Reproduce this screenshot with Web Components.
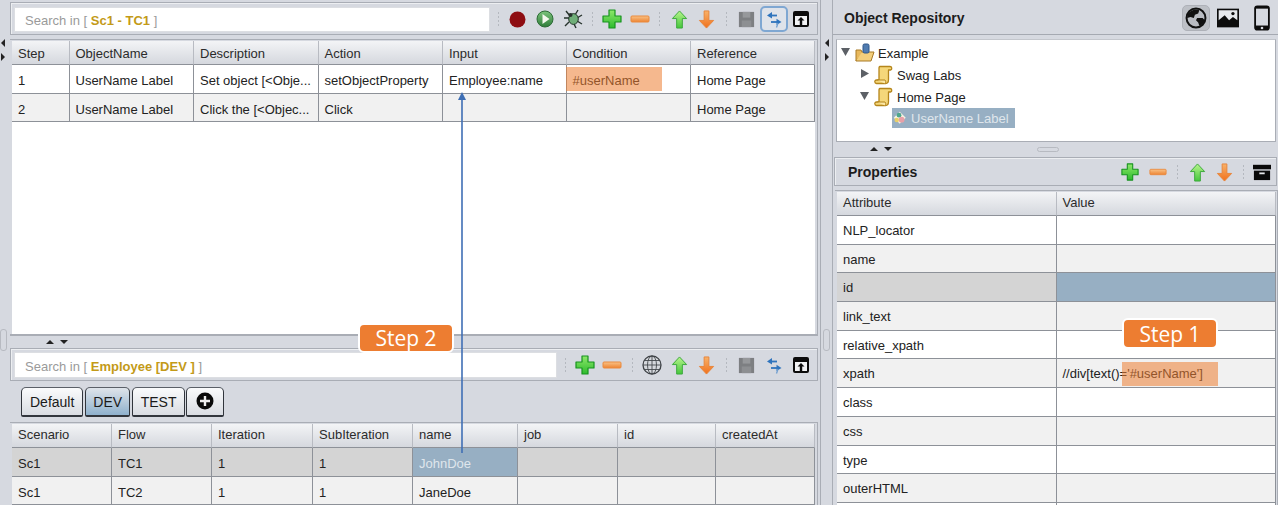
<!DOCTYPE html>
<html>
<head>
<meta charset="utf-8">
<title>Object Repository</title>
<style>
  html, body { margin: 0; height: 505px; overflow: hidden; background: #d6d9e0; }
  body { font: 13px "Liberation Sans", Arial, sans-serif; color: #222; }
</style>
</head>
<body>
<app-shell>
  <split-bar slot="edge" dir="v" bare></split-bar>

  <!-- columna izquierda -->
  <div slot="left">
    <tool-bar>
      <search-box slot="start" label="Sc1 - TC1"></search-box>
      <tool-sep></tool-sep>
      <tool-icon name="record"></tool-icon>
      <tool-icon name="play"></tool-icon>
      <tool-icon name="bug"></tool-icon>
      <tool-sep></tool-sep>
      <tool-icon name="plus"></tool-icon>
      <tool-icon name="minus"></tool-icon>
      <tool-sep></tool-sep>
      <tool-icon name="up"></tool-icon>
      <tool-icon name="down"></tool-icon>
      <tool-sep></tool-sep>
      <tool-icon name="save"></tool-icon>
      <tool-icon name="swap" active></tool-icon>
      <tool-icon name="box"></tool-icon>
    </tool-bar>
    <data-table id="steps" fill style="height:297px;margin:4px 2px 0 0;--hl:26px;--cl:31px"></data-table>
    <split-bar dir="h" arrows="35"></split-bar>
    <tool-bar>
      <search-box slot="start" label="Employee [DEV ]" style="height:26px;line-height:27px"></search-box>
      <tool-sep></tool-sep>
      <tool-icon name="plus"></tool-icon>
      <tool-icon name="minus"></tool-icon>
      <tool-sep></tool-sep>
      <tool-icon name="globe"></tool-icon>
      <tool-icon name="up"></tool-icon>
      <tool-icon name="down"></tool-icon>
      <tool-sep></tool-sep>
      <tool-icon name="save"></tool-icon>
      <tool-icon name="swap"></tool-icon>
      <tool-icon name="box"></tool-icon>
    </tool-bar>
    <tab-strip>
      <tab-item style="padding:0 8px">Default</tab-item>
      <tab-item selected style="padding:0 7px">DEV</tab-item>
      <tab-item style="padding:0 7.5px">TEST</tab-item>
      <tab-item add></tab-item>
    </tab-strip>
    <data-table id="data" style="margin:5px 2px 0 0;--hl:22px;--cl:31px"></data-table>
  </div>

  <split-bar slot="mid" dir="v"></split-bar>

  <!-- columna derecha -->
  <div slot="right">
    <title-bar label="Object Repository">
      <tool-icon name="earth" pressed></tool-icon>
      <tool-icon name="image"></tool-icon>
      <tool-icon name="phone"></tool-icon>
    </title-bar>
    <tree-view>
      <tree-row kind="folder" caret="open">Example</tree-row>
      <tree-row kind="scroll" caret="closed" level="1">Swag Labs</tree-row>
      <tree-row kind="scroll" caret="open" level="1">Home Page</tree-row>
      <tree-row kind="object" level="2" selected>UserName Label</tree-row>
    </tree-view>
    <split-bar dir="h" arrows="36" grip></split-bar>
    <tool-bar compact>
      <b slot="start" style="flex:1;padding-left:13px;font-size:14px;color:#1c1c1c">Properties</b>
      <tool-icon name="plus" small></tool-icon>
      <tool-icon name="minus" small></tool-icon>
      <tool-sep></tool-sep>
      <tool-icon name="up"></tool-icon>
      <tool-icon name="down"></tool-icon>
      <tool-sep style="width:10px"></tool-sep>
      <tool-icon name="archive" small></tool-icon>
    </tool-bar>
    <data-table id="props" style="margin:4px 0 0 2px;--hl:22px;--cl:29px"></data-table>
  </div>

  <!-- anotaciones encima de la captura -->
  <call-out slot="over" style="left:358px;top:323px;width:96px;height:30px">Step 2</call-out>
  <call-out slot="over" style="left:1122px;top:318px;width:96px;height:31px">Step 1</call-out>
  <mark-box slot="over" style="left:566px;top:67px;width:96px;height:24px"></mark-box>
  <mark-box slot="over" style="left:1122px;top:362px;width:96px;height:24px"></mark-box>
  <link-arrow slot="over" style="left:456px;top:90px"></link-arrow>
</app-shell>

<script>
// iconos de las barras, dibujados a mano sobre una caja de 20x20
const ICONS = {
  record: `<circle cx="10" cy="10" r="8.400" fill="#8e0d12"/>`,
  play: `<defs><linearGradient id="g" x1="0" y1="0" x2="0" y2="1"><stop offset="0" stop-color="#7cc47c"/><stop offset="1" stop-color="#2f7d3a"/></linearGradient></defs>
    <circle cx="10" cy="10" r="8" fill="url(#g)" stroke="#2d6b36"/><path d="M7.500 5l7 5-7 5z" fill="#f4f8ee"/>`,
  bug: `<g stroke="#27332c" stroke-width="1.400" fill="none"><path d="M3 2l4 5M1 9h5M2 17l4-4M15 1l-3 5M19 6l-5 3M19 15l-5-3M13 19l-2-4"/></g>
    <ellipse cx="10.500" cy="10" rx="4.800" ry="5.400" fill="#6fae78" stroke="#24362a"/><circle cx="7.500" cy="6" r="2" fill="#27332c"/>`,
  plus: `<defs><linearGradient id="g" x1="0" y1="0" x2="0" y2="1"><stop offset="0" stop-color="#8ee86a"/><stop offset="1" stop-color="#2dbb2d"/></linearGradient></defs>
    <path d="M7 1h6v6h6v6h-6v6H7v-6H1V7h6z" fill="url(#g)" stroke="#17931f" stroke-width="1.200" stroke-linejoin="round"/>`,
  minus: `<defs><linearGradient id="g" x1="0" y1="0" x2="0" y2="1"><stop offset="0" stop-color="#f9c387"/><stop offset="1" stop-color="#ee8432"/></linearGradient></defs>
    <rect x="1" y="7" width="18" height="6" rx="1" fill="url(#g)" stroke="#ea8a3f"/>`,
  up: `<defs><linearGradient id="g" x1="0" y1="0" x2="0" y2="1"><stop offset="0" stop-color="#b8f58c"/><stop offset="1" stop-color="#45c63c"/></linearGradient></defs>
    <path d="M10 1l7.500 8H13v10H7V9H2.500z" fill="url(#g)" stroke="#3aa83a" stroke-linejoin="round"/>`,
  down: `<defs><linearGradient id="g" x1="0" y1="0" x2="0" y2="1"><stop offset="0" stop-color="#f8b26a"/><stop offset="1" stop-color="#f0701c"/></linearGradient></defs>
    <path d="M7.500 1h5v10h5L10 19 2.500 11h5z" fill="url(#g)" stroke="#e8853a" stroke-linejoin="round"/>`,
  save: `<path d="M2 2h16v16H2z" fill="#7d7f82"/><path d="M6 2h8v6H6z" fill="#96989b"/><path d="M5 11h10v7H5z" fill="#8d8f92"/>`,
  swap: `<g fill="none" stroke="#2f74bd" stroke-width="1.800"><path d="M13 6.500H6"/><path d="M8 3L3 6.500 8 9.500z" fill="#2f74bd" stroke="none"/><path d="M7 13h8"/><path d="M12.500 9.800l5 3.200-5 3z" fill="#2f74bd" stroke="none"/><path d="M14 14l-1.500 4.500" stroke="#6f9ed0" stroke-width="1.300"/></g>`,
  box: `<rect x="2" y="2" width="16" height="16" rx="2" fill="#0c0c0c"/><path d="M4 7h12v9H4z" fill="#f2f3f5"/><path d="M10 8l3.500 3.500h-2.300V16H8.800v-4.500H6.500z" fill="#0c0c0c"/>`,
  globe: `<circle cx="10" cy="10" r="9" fill="#d5d8dd" stroke="#3e4246" stroke-width="1.300"/>
    <g fill="none" stroke="#45494e" stroke-width=".9"><ellipse cx="10" cy="10" rx="4.500" ry="9"/><path d="M10 1v18M1 10h18M2.200 5.500h15.600M2.200 14.500h15.600"/></g>`,
  archive: `<path d="M0 2h20v5H0z" fill="#0a0a0a"/><path d="M1 8.500h18V19H1z" fill="#0a0a0a"/><rect x="7" y="10.500" width="6" height="2" fill="#e4e6ea"/>`,
  earth: `<circle cx="10" cy="10" r="8.600" fill="#b9bcc2" stroke="#111" stroke-width="1.800"/>
    <path d="M5 4c3-2 6-2 8-1l-1 3-3 1-1 3-3-1-3 1c0-3 1-5 3-6zM11 10l5 0 2 2c-1 3-3 5-5 5l-1-3-2-2z" fill="#111"/>`,
  image: `<path d="M0 1.500h20v17H0z" fill="#0c0c0c"/><path d="M1.500 3h17v9l-4-3-3.500 3-4-4.500L1.500 12z" fill="#e6e8ec"/><circle cx="14.500" cy="6" r="1.500" fill="#0c0c0c"/>`,
  phone: `<rect x="4" y=".3" width="12" height="19.400" rx="2.400" fill="#0c0c0c"/><rect x="5.400" y="2.800" width="9.200" height="13" fill="#d6d9e0"/><circle cx="10" cy="17.700" r="1" fill="#d6d9e0"/>`,
  folder: `<path d="M1 18l3-9h15l-3 9z" fill="#f3cf7c" stroke="#a87a26"/><path d="M1 18V7h5l1 2" fill="#e8b85c" stroke="#a87a26"/><rect x="8" y="1" width="6" height="9" rx="1.500" fill="#4f7bb0" stroke="#2f5688"/>`,
  scroll: `<path d="M6 1.500h10c2 0 2.500 3 .5 3.500h-2v9.500c0 2-1 4-3 4H2.500c-2 0-2.500-3.500 0-3.500H5V4c0-1.500 0-2.500 1-2.500z" fill="#f5d77a" stroke="#b5861c" stroke-width="1.300" stroke-linejoin="round"/><path d="M3 15h8c1 1 1 2.500 0 3.500" fill="#fbe7a5" stroke="#b5861c"/>`,
  object: `<path d="M9 1l8 8-8 8-8-8z" fill="#f6f4e2"/><circle cx="8" cy="5.500" r="3.200" fill="#4fa78e"/><circle cx="11.500" cy="11.500" r="3.800" fill="#e8a0a8"/><circle cx="5" cy="12" r="3" fill="#e9cf6b"/>`
};

// contenedor general: columnas en flex y capa de anotaciones encima
class AppShell extends HTMLElement {
  constructor() {
    super();
    this.attachShadow({ mode: 'open' });
    this.shadowRoot.innerHTML = `
      <style>
        :host { display: flex; position: relative; width: 1278px; height: 505px; overflow: hidden; }
        ::slotted([slot=edge]) { width: 10px; flex: none; }
        ::slotted([slot=left]) { width: 810px; flex: none; padding-top: 2px; box-sizing: border-box; }
        ::slotted([slot=mid]) { width: 13px; flex: none; }
        ::slotted([slot=right]) { flex: 1; min-width: 0; padding-top: 2px; box-sizing: border-box; }
      </style>
      <slot name="edge"></slot><slot name="left"></slot><slot name="mid"></slot><slot name="right"></slot>
      <slot name="over"></slot>`;
  }
}

class ToolBar extends HTMLElement {
  constructor() {
    super();
    this.attachShadow({ mode: 'open' });
    this.shadowRoot.innerHTML = `
      <style>
        :host { display: flex; align-items: center; box-sizing: border-box; height: 33px; margin-right: 2px; padding: 0 2px 0 3px;
          border: 1px solid #a9adb5; background: #d6d9e0; box-shadow: inset 1px 1px 0 #eceef1; }
        :host([compact]) { height: 29px; margin: 1px 1px 0 1px; padding: 0; }
        ::slotted(search-box) { margin-right: 2px; }
        ::slotted([slot=start]) { flex: 1; min-width: 0; margin-top: 1px; }
        ::slotted(tool-icon) { margin-top: 1px; }
      </style>
      <slot name="start"></slot><slot></slot>`;
  }
}

class SearchBox extends HTMLElement {
  constructor() {
    super();
    this.attachShadow({ mode: 'open' });
    this.shadowRoot.innerHTML = `
      <style>
        :host { display: block; box-sizing: border-box; height: 25px; line-height: 25px; padding-left: 10px;
          background: #fff; border: 1px solid #dcdee2; font-size: 13px; color: #9a9a9a; white-space: nowrap; }
        b { color: #c39a18; }
      </style>
      Search in [ <b></b> ]`;
    this.shadowRoot.querySelector('b').textContent = this.getAttribute('label');
  }
}

class ToolSep extends HTMLElement {
  constructor() {
    super();
    this.attachShadow({ mode: 'open' });
    this.shadowRoot.innerHTML = `
      <style>
        :host { display: flex; flex-direction: column; align-items: center; justify-content: center; gap: 2px; width: 12px; flex: none; }
        i { width: 1px; height: 2px; background: #b4b8bf; }
      </style>
      <i></i><i></i><i></i><i></i>`;
  }
}

class ToolIcon extends HTMLElement {
  constructor() {
    super();
    this.attachShadow({ mode: 'open' });
    const name = this.getAttribute('name');
    this.shadowRoot.innerHTML = `
      <style>
        :host { display: flex; align-items: center; justify-content: center; width: 27.500px; height: 26px; flex: none; box-sizing: border-box; }
        :host([active]) { border: 2px solid #7fa7d2; border-radius: 5px; background: #dfe3ea; }
        :host([pressed]) { background: #bdc0c6; border: 1px solid #aeb1b8; border-radius: 5px; }
        svg { width: 20px; height: 20px; display: block; flex: none; }
        :host([small]) svg { width: 18px; height: 18px; }
        :host([name=record]) svg, :host([name=up]) svg, :host([name=down]) svg, :host([name=save]) svg { width: 19px; height: 19px; }
        :host([name=earth]) svg { width: 22px; height: 22px; }
        :host([name=image]) svg { width: 22px; height: 22px; }
        :host([name=phone]) svg { width: 26px; height: 26px; }
      </style>
      <svg viewBox="0 0 20 20">${ICONS[name] || ''}</svg>`;
  }
}

class TitleBar extends HTMLElement {
  constructor() {
    super();
    this.attachShadow({ mode: 'open' });
    this.shadowRoot.innerHTML = `
      <style>
        :host { display: flex; align-items: center; box-sizing: border-box; height: 33px; padding: 0 2.500px 0 11px; border-bottom: 1px solid #a5a9b1; }
        b { flex: 1; font-size: 14px; color: #1c1c1c; }
        ::slotted(tool-icon:nth-child(2)) { margin-left: 4.500px; }
        ::slotted(tool-icon:nth-child(3)) { margin-left: 6.500px; }
      </style>
      <b></b><slot></slot>`;
    this.shadowRoot.querySelector('b').textContent = this.getAttribute('label');
  }
}

class TreeView extends HTMLElement {
  constructor() {
    super();
    this.attachShadow({ mode: 'open' });
    this.shadowRoot.innerHTML = `
      <style>
        :host { display: block; box-sizing: border-box; height: 103px; margin: 4px 2px 0 3px; padding-top: 2px;
          background: #fff; border: 1px solid #a9adb5; border-top-color: #c3c6cc; overflow: hidden; }
      </style>
      <slot></slot>`;
  }
}

class TreeRow extends HTMLElement {
  constructor() {
    super();
    this.attachShadow({ mode: 'open' });
    const level = +this.getAttribute('level') || 0;
    const caret = this.getAttribute('caret');
    const kind = this.getAttribute('kind');
    const glyph = caret === 'open' ? 'M1 1h9L5.500 9z' : caret === 'closed' ? 'M2 0l8 4.500L2 9z' : '';
    this.shadowRoot.innerHTML = `
      <style>
        :host { display: flex; align-items: center; height: 22px; color: #222; font-size: 13px; padding-left: ${3 + level * 19}px; }
        :host([selected]) { height: 20px; padding-left: 55px; }
        .caret { width: 15px; height: 9px; flex: none; margin-top: -4px; }
        .ico { width: 20px; height: 20px; flex: none; margin-right: 3px; }
        .lbl { white-space: nowrap; }
        :host([selected]) .wrap { background: #97afc3; color: #dfe6ec; height: 20px; }
        .wrap { display: flex; align-items: center; padding-right: 6px; }
        :host([selected]) .ico { width: 15px; height: 15px; margin: 0 3px 0 1px; }
      </style>
      ${glyph ? `<svg class="caret" viewBox="0 0 15 9"><path d="${glyph}" fill="#5c6066"/></svg>` : ''}
      <span class="wrap">
        <svg class="ico" viewBox="0 0 20 20">${ICONS[kind]}</svg>
        <span class="lbl"><slot></slot></span>
      </span>`;
  }
}

class SplitBar extends HTMLElement {
  constructor() {
    super();
    this.attachShadow({ mode: 'open' });
    const dir = this.getAttribute('dir');
    const arrows = this.getAttribute('arrows') || 0;
    const vMarks = `<svg class="m" width="6" height="24" viewBox="0 0 6 24"><path d="M5 1v8L1 5zM1 15v8l4-4z" fill="#222"/></svg>
                    <i class="g"></i>`;
    const hMarks = `<svg class="m" width="26" height="6" viewBox="0 0 26 6"><path d="M1 5h8L5 1zM15 1h8l-4 4z" fill="#222"/></svg>
                    <i class="g"></i>`;
    this.shadowRoot.innerHTML = `
      <style>
        :host { display: block; box-sizing: border-box; background: #d6d9e0; }
        :host([dir=h]) { display: flex; align-items: center; height: 12px; padding-left: ${arrows}px; position: relative; }
        :host([dir=v]) { display: flex; flex-direction: column; align-items: center; padding-top: 38px;
          border-left: 1px solid #a9adb5; border-right: 1px solid #a9adb5; }
        :host([bare]) { border: 0; align-items: flex-start; }
        .g { display: none; }
        :host([dir=v]) .g { display: block; width: 5px; height: 20px; margin-top: 267px; border: 1px solid #b7bac1; border-radius: 3px; }
        :host([grip]) { height: 14px; }
        :host([grip]) .g { display: block; width: 20px; height: 3px; margin-left: 142px; border: 1px solid #b7bac1; border-radius: 3px; }
      </style>
      ${dir === 'h' ? hMarks : vMarks}`;
  }
}

class TabStrip extends HTMLElement {
  constructor() {
    super();
    this.attachShadow({ mode: 'open' });
    this.shadowRoot.innerHTML = `
      <style>
        :host { display: flex; gap: 2px; height: 30px; padding: 6px 0 0 11px; }
        ::slotted([add]) { margin-left: -1px; }
      </style>
      <slot></slot>`;
  }
}

class TabItem extends HTMLElement {
  constructor() {
    super();
    this.attachShadow({ mode: 'open' });
    const add = this.hasAttribute('add');
    this.shadowRoot.innerHTML = `
      <style>
        :host { display: flex; align-items: center; box-sizing: border-box; height: 30px; padding: 0 8px;
          border: 1px solid #31353c; border-bottom-width: 2px; border-top-color: #5b6068; border-radius: 5px 5px 2px 2px;
          background: linear-gradient(#fafbfc, #d9dce2); font-size: 14px; color: #1a1a1a; }
        :host([selected]) { background: linear-gradient(#dfe4ea, #8fb1cd); }
        :host([add]) { padding: 0 9px 2px; }
        svg { width: 18px; height: 18px; display: block; }
      </style>
      ${add ? '<svg viewBox="0 0 18 18"><circle cx="9" cy="9" r="8.500" fill="#0a0a0a"/><path d="M7.800 4h2.400v3.800H14v2.400h-3.800V14H7.800v-3.800H4V7.800h3.800z" fill="#eee"/></svg>' : '<slot></slot>'}`;
  }
}

// tabla simple: cabecera + filas, se alimenta con la propiedad data
class DataTable extends HTMLElement {
  constructor() {
    super();
    this.attachShadow({ mode: 'open' });
    this.shadowRoot.innerHTML = `
      <style>
        :host { display: block; box-sizing: border-box; padding: 1px 2px 0 2px; border: 0 solid #a9adb5; border-width: 1px 1px 0 0; overflow: hidden; }
        :host([fill]) { border-bottom-width: 2px; }
        .grid { display: grid; grid-auto-rows: 28.700px; background: #fff; height: 100%; align-content: start; }
        .h { height: 24px; box-sizing: border-box; padding: 0 6px; line-height: var(--hl, 24px); font-size: 13px; color: #2b2b2b; overflow: hidden;
          background: linear-gradient(#f3f4f6, #d5d8de); border-right: 1px solid #b8bbc2; border-bottom: 1px solid #8d9198; white-space: nowrap; }
        .c { box-sizing: border-box; padding: 0 6px; line-height: var(--cl, 29px); font-size: 13px; color: #222; white-space: nowrap; overflow: hidden;
          border-right: 1px solid #8d9198; border-bottom: 1px solid #8d9198; }
        .alt { background: #f1f1f1; }
        .sel { background: #d4d4d4; }
        .on { background: #97afc3; color: #dfe6ec; }
      </style>
      <div class="grid"></div>`;
  }
  set data({ cols, head, rows, selected, selectedCell }) {
    const grid = this.shadowRoot.querySelector('.grid');
    grid.style.gridTemplateColumns = cols.map(c => c + 'px').join(' ');
    grid.style.gridTemplateRows = '24px';
    head.forEach(t => {
      const h = document.createElement('div');
      h.className = 'h';
      h.textContent = t;
      grid.appendChild(h);
    });
    rows.forEach((row, r) => {
      row.forEach((t, c) => {
        const d = document.createElement('div');
        d.className = 'c' + (r === selected ? ' sel' : r % 2 ? ' alt' : '');
        if (r === selected && c === selectedCell) d.className = 'c on';
        d.textContent = t;
        grid.appendChild(d);
      });
    });
  }
}

class CallOut extends HTMLElement {
  constructor() {
    super();
    this.attachShadow({ mode: 'open' });
    this.shadowRoot.innerHTML = `
      <style>
        :host { position: absolute; display: flex; align-items: center; justify-content: center; box-sizing: border-box;
          background: #ed7d31; border: 2px solid #fff; border-radius: 6px; color: #fff; font: 21px "Open Sans", sans-serif; }
      </style>
      <slot></slot>`;
  }
}

class MarkBox extends HTMLElement {
  constructor() {
    super();
    this.attachShadow({ mode: 'open' });
    this.shadowRoot.innerHTML = `<style>:host { position: absolute; display: block; background: rgba(237, 125, 49, .55); }</style>`;
  }
}

class LinkArrow extends HTMLElement {
  constructor() {
    super();
    this.attachShadow({ mode: 'open' });
    this.shadowRoot.innerHTML = `
      <style>:host { position: absolute; display: block; width: 12px; height: 364px; } svg { display: block; }</style>
      <svg width="12" height="364" viewBox="0 0 12 364"><path d="M6 8V363" stroke="#3f6fb5" stroke-width="1.600" fill="none"/><path d="M6 2l4 8H2z" fill="#3f6fb5"/></svg>`;
  }
}

customElements.define('app-shell', AppShell);
customElements.define('tool-bar', ToolBar);
customElements.define('search-box', SearchBox);
customElements.define('tool-sep', ToolSep);
customElements.define('tool-icon', ToolIcon);
customElements.define('title-bar', TitleBar);
customElements.define('tree-view', TreeView);
customElements.define('tree-row', TreeRow);
customElements.define('split-bar', SplitBar);
customElements.define('tab-strip', TabStrip);
customElements.define('tab-item', TabItem);
customElements.define('data-table', DataTable);
customElements.define('call-out', CallOut);
customElements.define('mark-box', MarkBox);
customElements.define('link-arrow', LinkArrow);

document.getElementById('steps').data = {
  cols: [57.5, 124.5, 124.5, 124.5, 123.5, 124.5, 124],
  head: ['Step', 'ObjectName', 'Description', 'Action', 'Input', 'Condition', 'Reference'],
  rows: [
    ['1', 'UserName Label', 'Set object [<Obje...', 'setObjectProperty', 'Employee:name', '#userName', 'Home Page'],
    ['2', 'UserName Label', 'Click the [<Objec...', 'Click', '', '', 'Home Page']
  ]
};
document.getElementById('data').data = {
  cols: [100, 100, 101, 100, 105, 100, 98, 99],
  head: ['Scenario', 'Flow', 'Iteration', 'SubIteration', 'name', 'job', 'id', 'createdAt'],
  rows: [
    ['Sc1', 'TC1', '1', '1', 'JohnDoe', '', '', ''],
    ['Sc1', 'TC2', '1', '1', 'JaneDoe', '', '', '']
  ],
  selected: 0,
  selectedCell: 4
};
document.getElementById('props').data = {
  cols: [219.5, 219],
  head: ['Attribute', 'Value'],
  rows: [
    ['NLP_locator', ''], ['name', ''], ['id', ''], ['link_text', ''], ['relative_xpath', ''],
    ["xpath", "//div[text()='#userName']"], ['class', ''], ['css', ''], ['type', ''], ['outerHTML', ''], ['', '']
  ],
  selected: 2,
  selectedCell: 1
};
</script>
</body>
</html>
